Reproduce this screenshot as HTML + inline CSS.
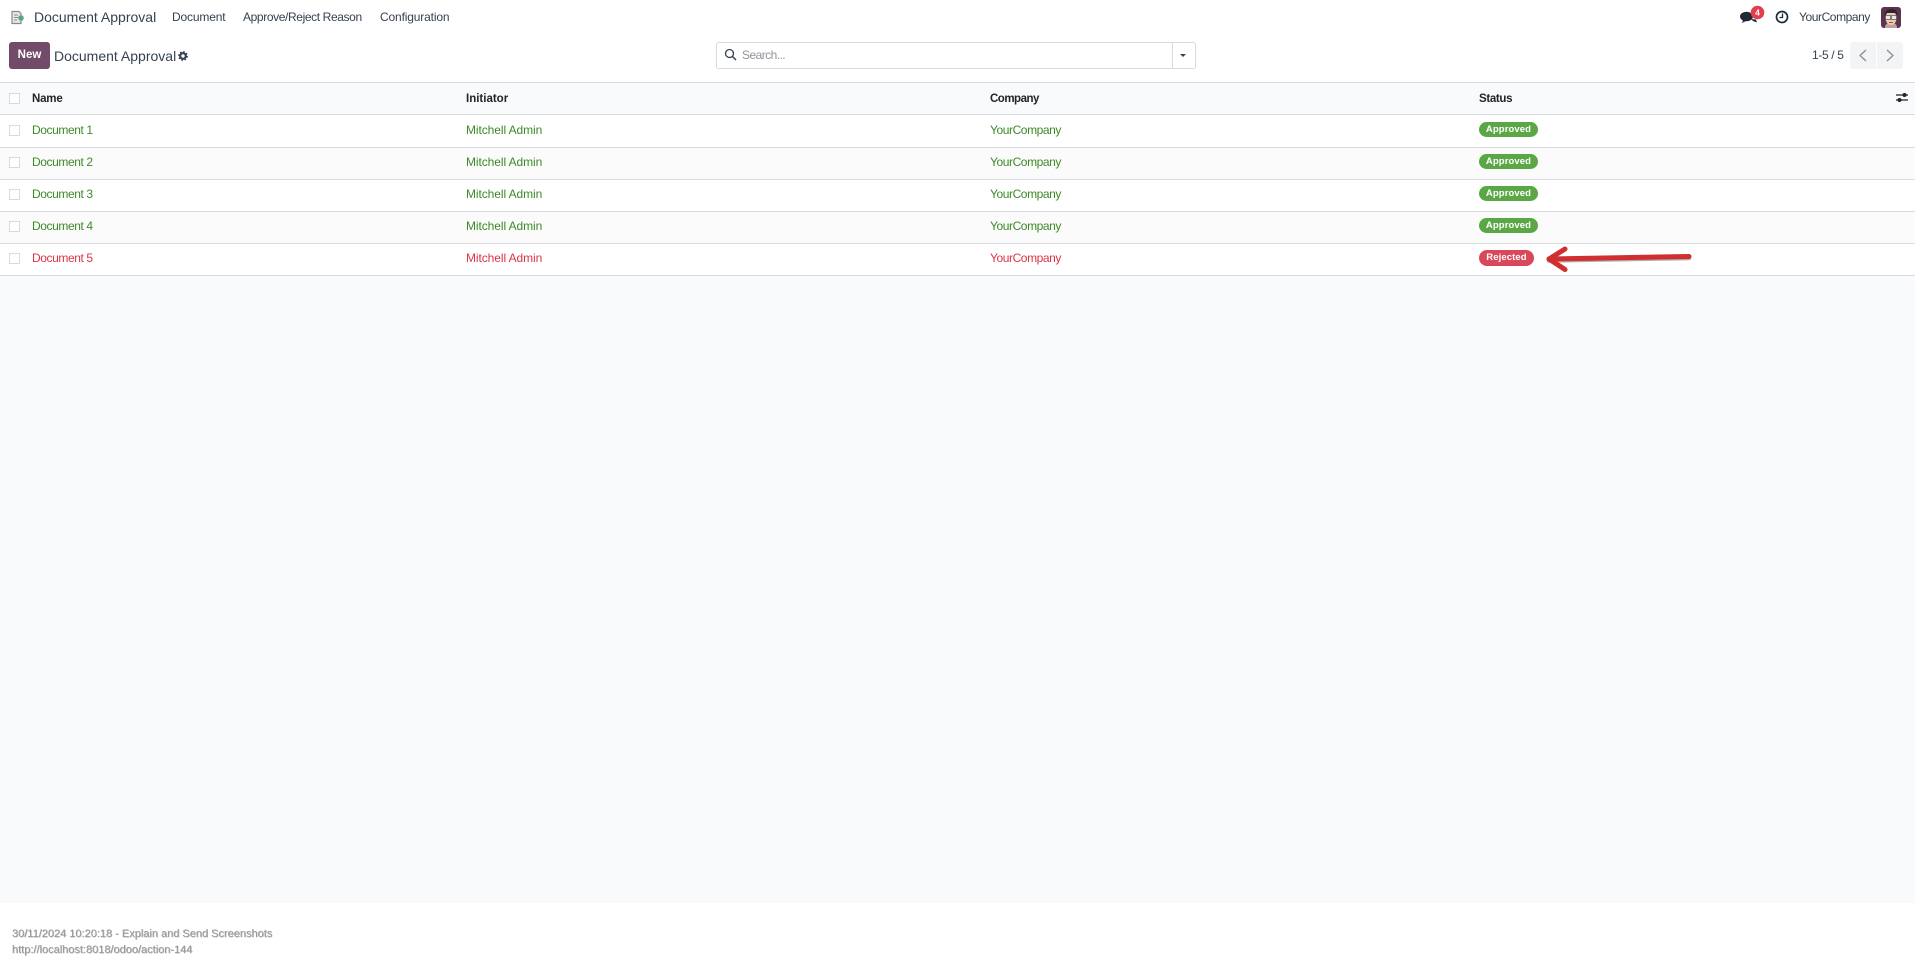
<!DOCTYPE html>
<html><head><meta charset="utf-8"><title>Document Approval</title>
<style>
html,body{margin:0;padding:0;width:1915px;height:968px;overflow:hidden;background:#fff;font-family:"Liberation Sans",sans-serif;}
.t{position:absolute;white-space:nowrap;line-height:16px;}
.b{position:absolute;left:0;width:1915px;height:1px;background:#d8dadd;}
.r{position:absolute;left:0;width:1915px;}
.c{position:absolute;left:9px;width:9px;height:9px;border:1px solid #d8dadd;background:#fff;}
.g{color:#3d8a28;font-size:12px}
.d{color:#dc3545;font-size:12px}
.x1{letter-spacing:-.4px}.x2{letter-spacing:-.08px}.x3{letter-spacing:-.42px}
.h{color:#212529;font-size:11.5px;font-weight:bold;}
.n{color:#374151;font-size:12px}
.p{position:absolute;left:1479px;height:15px;border-radius:8px;color:#fff;font-size:9.5px;font-weight:bold;line-height:15px;text-align:center;letter-spacing:.1px}
.f{font-size:11px;line-height:15px;color:#9a9a9a;text-shadow:.6px .3px 0 rgba(120,120,120,.55)}
</style></head><body>
<div style="position:absolute;left:0;top:82px;width:1915px;height:821px;background:#f9fafb"></div>
<div class="r" style="top:115px;height:32px;background:#fff"></div>
<div class="r" style="top:148px;height:31px;background:#fbfbfb"></div>
<div class="r" style="top:180px;height:31px;background:#fff"></div>
<div class="r" style="top:212px;height:31px;background:#fbfbfb"></div>
<div class="r" style="top:244px;height:31px;background:#fff"></div>
<div class="b" style="top:82px"></div><div class="b" style="top:114px"></div><div class="b" style="top:147px"></div><div class="b" style="top:179px"></div><div class="b" style="top:211px"></div><div class="b" style="top:243px"></div><div class="b" style="top:275px"></div>

<svg style="position:absolute;left:10px;top:10px" width="16" height="16" viewBox="0 0 16 16"><path d="M2 1.500h7l2 2v10H2z" fill="#e8e8e8" stroke="#8a8a8a" stroke-width="1.200"/><path d="M4 5h4M4 7.500h4M4 10h3" stroke="#8a8a8a"/><circle cx="11" cy="8" r="2.800" fill="#5aa77f"/></svg>
<span class="t" style="left:34px;top:9px;font-size:14px;color:#374151">Document Approval</span>
<span class="t n" style="left:172px;top:9px;letter-spacing:-.15px">Document</span>
<span class="t n" style="left:243px;top:9px;letter-spacing:-.38px">Approve/Reject Reason</span>
<span class="t n" style="left:380px;top:9px;letter-spacing:-.15px">Configuration</span>

<div style="position:absolute;left:9px;top:42px;width:41px;height:27px;border-radius:3px;background:#714b67;color:#fff;font-size:11.5px;font-weight:bold;line-height:27px;text-align:center">New</div>
<span class="t" style="left:54px;top:48px;font-size:14px;color:#374151">Document Approval</span>
<svg style="position:absolute;left:178px;top:51px" width="10" height="10" viewBox="0 0 10 10"><circle cx="5" cy="5" r="2.800" fill="none" stroke="#374151" stroke-width="2.200"/><circle cx="5" cy="5" r="4.200" fill="none" stroke="#374151" stroke-width="1.400" stroke-dasharray="1.600 1.700"/></svg>

<div style="position:absolute;left:716px;top:42px;width:478px;height:25px;border:1px solid #d8dadd;border-radius:3px;background:#fff"></div>
<div style="position:absolute;left:1172px;top:43px;width:1px;height:25px;background:#d8dadd"></div>
<svg style="position:absolute;left:724px;top:48px" width="13" height="13" viewBox="0 0 13 13"><circle cx="5.500" cy="5.500" r="4" fill="none" stroke="#374151" stroke-width="1.300"/><path d="M8.500 8.500L12 12" stroke="#374151" stroke-width="1.500"/></svg>
<span class="t" style="left:742px;top:47px;font-size:12px;color:#8f959d;letter-spacing:-.55px">Search...</span>
<div style="position:absolute;left:1180px;top:54px;border-left:3.500px solid transparent;border-right:3.500px solid transparent;border-top:3.500px solid #374151"></div>

<span class="t n" style="left:1812px;top:47px;letter-spacing:-.35px">1-5 / 5</span>
<div style="position:absolute;left:1850px;top:42px;width:26px;height:27px;border-radius:3px 0 0 3px;background:#f3f4f6"></div>
<div style="position:absolute;left:1877px;top:42px;width:26px;height:27px;border-radius:0 3px 3px 0;background:#f3f4f6"></div>
<svg style="position:absolute;left:1850px;top:42px" width="53" height="27" viewBox="0 0 53 27"><path d="M16 8l-6 5.500 6 5.500M37 8l6 5.500-6 5.500" fill="none" stroke="#85898e" stroke-width="1.200"/></svg>

<svg style="position:absolute;left:1739px;top:5px" width="26" height="20" viewBox="0 0 26 20"><ellipse cx="7.500" cy="11.500" rx="6.500" ry="4.700" fill="#1f2a38"/><path d="M4 15l-1 3 4-2zM12 14l5 .5 1 3-4-1.500z" fill="#1f2a38"/><circle cx="18.500" cy="7.500" r="6.800" fill="#e0404d"/><text x="18.500" y="10.500" font-size="8.500" font-weight="bold" fill="#fff" text-anchor="middle" font-family="Liberation Sans">4</text></svg>
<svg style="position:absolute;left:1775px;top:10px" width="14" height="14" viewBox="0 0 14 14"><circle cx="7" cy="7" r="5.500" fill="#fff" stroke="#1f2a38" stroke-width="1.700"/><path d="M7.500 3.500V7.500H4.500" fill="none" stroke="#1f2a38" stroke-width="1.300"/></svg>
<span class="t n x3" style="left:1799px;top:9px">YourCompany</span>
<svg style="position:absolute;left:1881px;top:7px;border-radius:3px" width="20" height="21" viewBox="0 0 20 21"><rect width="20" height="21" fill="#5e3350"/><path d="M4 21c0-3 1-5 6-5s6 2 6 5z" fill="#b9a3a3"/><ellipse cx="10" cy="11" rx="5.500" ry="7" fill="#f2c9ab"/><path d="M3.500 10c-.5-6 3-8 7-8s6.500 2 6 7l-2-3H6z" fill="#2c2630"/><rect x="4.500" y="8.500" width="5" height="4" fill="#e8e8e8" stroke="#555" stroke-width=".7"/><rect x="10.500" y="8.500" width="5" height="4" fill="#e8e8e8" stroke="#555" stroke-width=".7"/><path d="M8 15.500h4" stroke="#a5483c" stroke-width="1"/></svg>

<div class="c" style="top:93px"></div>
<span class="t h" style="left:32px;top:91px;letter-spacing:-.2px">Name</span>
<span class="t h" style="left:466px;top:91px">Initiator</span>
<span class="t h" style="left:990px;top:91px;letter-spacing:-.5px">Company</span>
<span class="t h" style="left:1479px;top:91px;letter-spacing:-.33px">Status</span>
<svg style="position:absolute;left:1896px;top:92px" width="12" height="11" viewBox="0 0 12 11"><path d="M0 3h12M0 8h12" stroke="#212529" stroke-width="1.200"/><circle cx="8.500" cy="3" r="2" fill="#212529"/><circle cx="3.500" cy="8" r="2" fill="#212529"/></svg>

<div class="c" style="top:125px"></div><span class="t g x1" style="left:32px;top:122px">Document 1</span><span class="t g x2" style="left:466px;top:122px">Mitchell Admin</span><span class="t g x3" style="left:990px;top:122px">YourCompany</span><div class="p" style="top:122px;width:59px;background:#5aa845">Approved</div>
<div class="c" style="top:157px"></div><span class="t g x1" style="left:32px;top:154px">Document 2</span><span class="t g x2" style="left:466px;top:154px">Mitchell Admin</span><span class="t g x3" style="left:990px;top:154px">YourCompany</span><div class="p" style="top:154px;width:59px;background:#5aa845">Approved</div>
<div class="c" style="top:189px"></div><span class="t g x1" style="left:32px;top:186px">Document 3</span><span class="t g x2" style="left:466px;top:186px">Mitchell Admin</span><span class="t g x3" style="left:990px;top:186px">YourCompany</span><div class="p" style="top:186px;width:59px;background:#5aa845">Approved</div>
<div class="c" style="top:221px"></div><span class="t g x1" style="left:32px;top:218px">Document 4</span><span class="t g x2" style="left:466px;top:218px">Mitchell Admin</span><span class="t g x3" style="left:990px;top:218px">YourCompany</span><div class="p" style="top:218px;width:59px;background:#5aa845">Approved</div>
<div class="c" style="top:253px"></div><span class="t d x1" style="left:32px;top:250px">Document 5</span><span class="t d x2" style="left:466px;top:250px">Mitchell Admin</span><span class="t d x3" style="left:990px;top:250px">YourCompany</span><div class="p" style="top:250px;width:55px;height:16px;line-height:16px;background:#d9475a">Rejected</div>

<svg style="position:absolute;left:1540px;top:240px" width="160" height="40" viewBox="0 0 160 40"><path d="M9 20.500L149 18" stroke="#6b6b6b" stroke-width="4.500" stroke-linecap="round" opacity=".55"/><path d="M9 19L149 16.500" stroke="#d12f2f" stroke-width="5" stroke-linecap="round"/><path d="M25 9L9 19 25 29.500" fill="none" stroke="#d12f2f" stroke-width="5" stroke-linecap="round" stroke-linejoin="round"/></svg>

<span class="t f" style="left:12px;top:927px">30/11/2024 10:20:18 - Explain and Send Screenshots</span>
<span class="t f" style="left:12px;top:943px">http://localhost:8018/odoo/action-144</span>
</body></html>
